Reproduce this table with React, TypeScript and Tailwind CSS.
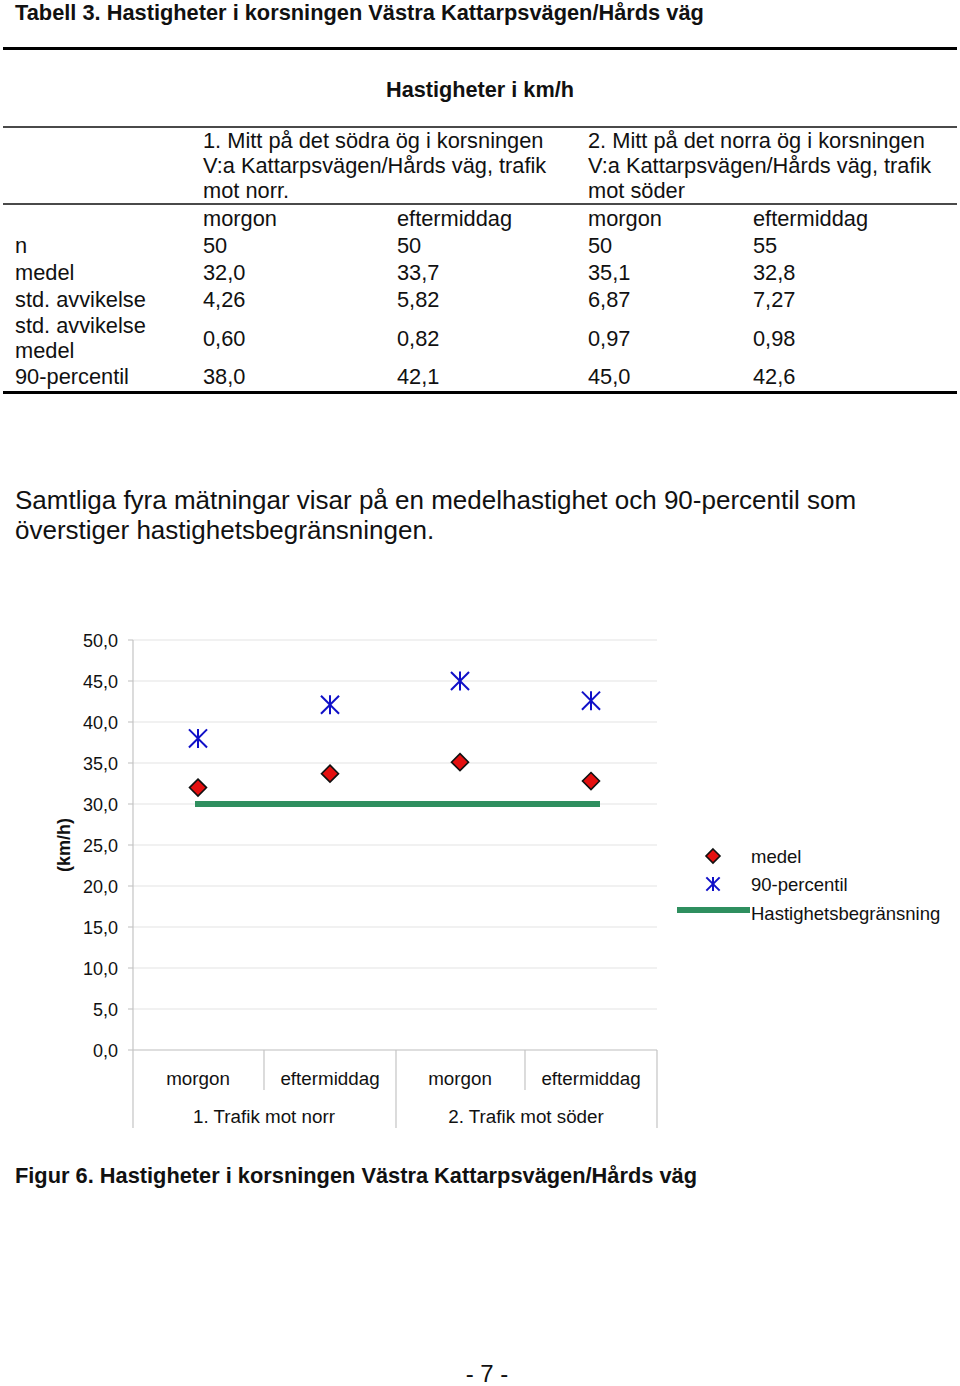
const cols = "grid grid-cols-[200px_194px_191px_165px_204px]";

const rows: { label: string[]; values: string[] }[] = [
  { label: ["n"], values: ["50", "50", "50", "55"] },
  { label: ["medel"], values: ["32,0", "33,7", "35,1", "32,8"] },
  { label: ["std. avvikelse"], values: ["4,26", "5,82", "6,87", "7,27"] },
  { label: ["std. avvikelse", "medel"], values: ["0,60", "0,82", "0,97", "0,98"] },
  { label: ["90-percentil"], values: ["38,0", "42,1", "45,0", "42,6"] },
];

const xs = [198, 330, 460, 591];
const medel = [32.0, 33.7, 35.1, 32.8];
const p90 = [38.0, 42.1, 45.0, 42.6];
// svg starts at page y 620
const Y0 = 620;
const yOf = (v: number) => 1050 - v * 8.2 - Y0;

function Diamond({ x, y, r }: { x: number; y: number; r: number }) {
  return (
    <polygon
      points={`${x},${y - r} ${x + r},${y} ${x},${y + r} ${x - r},${y}`}
      fill="#e41010"
      stroke="#111"
      strokeWidth={1.6}
    />
  );
}

function Star({ x, y, r }: { x: number; y: number; r: number }) {
  const d = r * 0.95;
  return (
    <g stroke="#1010c8" strokeWidth={2}>
      <line x1={x} y1={y - r} x2={x} y2={y + r} />
      <line x1={x - d} y1={y - d} x2={x + d} y2={y + d} />
      <line x1={x - d} y1={y + d} x2={x + d} y2={y - d} />
    </g>
  );
}

function Chart() {
  const ticks = Array.from({ length: 11 }, (_, i) => 50 - i * 5);
  return (
    <svg width={960} height={520} className="block" style={{ fontFamily: '"Liberation Sans", Arial, sans-serif' }}>
      {ticks.map((t) => {
        const y = yOf(t);
        return (
          <g key={t}>
            {t !== 0 && <line x1={133} x2={657} y1={y} y2={y} stroke="#e3e3e3" strokeWidth={1} />}
            <line x1={128} x2={133} y1={y} y2={y} stroke="#bdbdbd" strokeWidth={1} />
            <text x={118} y={y + 6.5} textAnchor="end" fontSize={18} fill="#111">
              {t.toFixed(1).replace(".", ",")}
            </text>
          </g>
        );
      })}
      <line x1={133} x2={657} y1={yOf(0)} y2={yOf(0)} stroke="#bdbdbd" strokeWidth={1.2} />
      <line x1={133} x2={133} y1={yOf(50)} y2={1128 - Y0} stroke="#c4c4c4" strokeWidth={1.2} />
      <line x1={264} x2={264} y1={yOf(0)} y2={1090 - Y0} stroke="#c4c4c4" strokeWidth={1.2} />
      <line x1={396} x2={396} y1={yOf(0)} y2={1128 - Y0} stroke="#c4c4c4" strokeWidth={1.2} />
      <line x1={525} x2={525} y1={yOf(0)} y2={1090 - Y0} stroke="#c4c4c4" strokeWidth={1.2} />
      <line x1={657} x2={657} y1={yOf(0)} y2={1128 - Y0} stroke="#c4c4c4" strokeWidth={1.2} />

      {["morgon", "eftermiddag", "morgon", "eftermiddag"].map((c, i) => (
        <text key={i} x={xs[i]} y={1078 + 7 - Y0} textAnchor="middle" fontSize={18.8} fill="#111">
          {c}
        </text>
      ))}
      <text x={264} y={1116 + 7 - Y0} textAnchor="middle" fontSize={18.8} fill="#111">
        1. Trafik mot norr
      </text>
      <text x={526} y={1116 + 7 - Y0} textAnchor="middle" fontSize={18.8} fill="#111">
        2. Trafik mot söder
      </text>

      <text
        x={0}
        y={0}
        transform={`translate(70 ${845 - Y0}) rotate(-90)`}
        textAnchor="middle"
        fontSize={18}
        fontWeight="bold"
        fill="#111"
      >
        (km/h)
      </text>

      <line x1={195} x2={600} y1={yOf(30)} y2={yOf(30)} stroke="#2f8f5f" strokeWidth={6} />

      {xs.map((x, i) => (
        <Diamond key={"d" + i} x={x} y={yOf(medel[i])} r={8.5} />
      ))}
      {xs.map((x, i) => (
        <Star key={"s" + i} x={x} y={yOf(p90[i])} r={9.5} />
      ))}

      {/* legend */}
      <Diamond x={713} y={856 - Y0} r={7} />
      <text x={751} y={856 + 6.5 - Y0} fontSize={18.5} fill="#111">medel</text>
      <Star x={713} y={884 - Y0} r={7} />
      <text x={751} y={884 + 6.5 - Y0} fontSize={18.5} fill="#111">90-percentil</text>
      <line x1={677} x2={750} y1={910 - Y0} y2={910 - Y0} stroke="#2f8f5f" strokeWidth={6} />
      <text x={751} y={913 + 6.5 - Y0} fontSize={18.5} fill="#111">Hastighetsbegränsning</text>
    </svg>
  );
}

export default function App() {
  return (
    <div className="w-[960px] h-[1386px] bg-white text-[#111] font-['Liberation_Sans',Arial,sans-serif] overflow-hidden">
      <h1 className="pl-[15px] h-[26px] leading-[26px] text-[21.8px] font-bold">
        Tabell 3. Hastigheter i korsningen Västra Kattarpsvägen/Hårds väg
      </h1>

      <div className="ml-[3px] w-[954px]">
        <div className="mt-[21px] h-[3px] bg-black" />
        <div className="h-[76px] pt-[27px] leading-[26px] text-[21.7px] font-bold text-center">
          Hastigheter i km/h
        </div>
        <div className="h-[2px] bg-[#4a4a4a]" />

        <div className={`${cols} text-[21.8px] leading-[25px]`}>
          <div />
          <div className="col-span-2">
            1. Mitt på det södra ög i korsningen
            <br />
            V:a Kattarpsvägen/Hårds väg, trafik
            <br />
            mot norr.
          </div>
          <div className="col-span-2">
            2. Mitt på det norra ög i korsningen
            <br />
            V:a Kattarpsvägen/Hårds väg, trafik
            <br />
            mot söder
          </div>
        </div>
        <div className="h-[2px] bg-[#4a4a4a]" />

        <div className={`${cols} text-[21.8px] h-[27px] leading-[27px]`}>
          <div />
          <div>morgon</div>
          <div>eftermiddag</div>
          <div>morgon</div>
          <div>eftermiddag</div>
        </div>
        {rows.map((r, i) => (
          <div
            key={i}
            className={`${cols} text-[21.8px] items-center ${r.label.length > 1 ? "h-[50px] leading-[25px]" : "h-[27px] leading-[27px]"}`}
          >
            <div className="pl-[12px]">
              {r.label.map((l, j) => (
                <div key={j}>{l}</div>
              ))}
            </div>
            {r.values.map((v, j) => (
              <div key={j}>{v}</div>
            ))}
          </div>
        ))}
        <div className="mt-[1px] h-[3px] bg-black" />
      </div>

      <p className="mt-[91px] pl-[15px] pr-[60px] text-[26px] leading-[30px]">
        Samtliga fyra mätningar visar på en medelhastighet och 90-percentil som överstiger hastighetsbegränsningen.
      </p>

      <div className="mt-[75px]">
        <Chart />
      </div>

      <p className="mt-[23px] pl-[15px] h-[26px] leading-[26px] text-[21.8px] font-bold">
        Figur 6. Hastigheter i korsningen Västra Kattarpsvägen/Hårds väg
      </p>

      <p className="mt-[174px] pl-[14px] text-center text-[24px] leading-[22px]">- 7 -</p>
    </div>
  );
}
